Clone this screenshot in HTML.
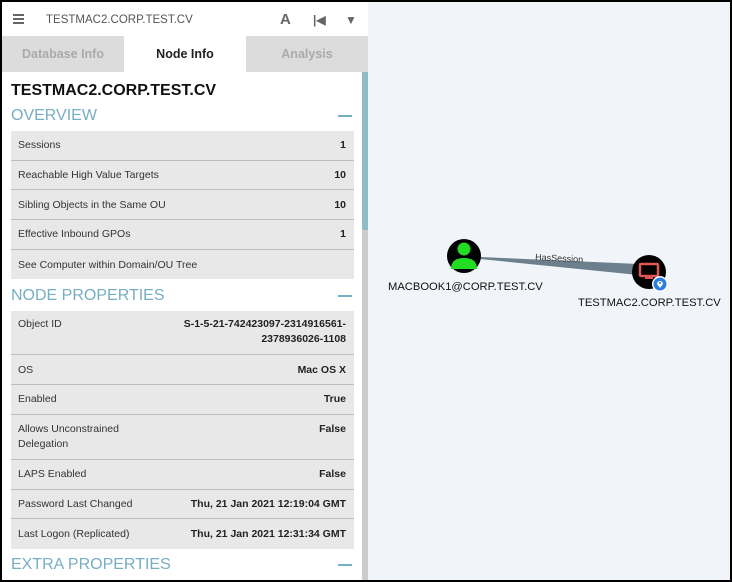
<!DOCTYPE html>
<html><head><style>
*{margin:0;padding:0;box-sizing:border-box}
body{width:732px;height:582px;overflow:hidden;background:#000;font-family:"Liberation Sans",sans-serif;position:relative}
#g{position:absolute;left:368px;top:2px;width:362px;height:578px;background:#f1f4f9}
#p{position:absolute;left:2px;top:2px;width:366px;height:578px;background:#fff;overflow:hidden}
.hdr{height:34px;position:relative;color:#555;font-size:11.5px}
.tabs{position:absolute;top:34px;left:0;width:366px;height:36px;display:flex;background:#dcdcdc}
.tabs div{flex:1;text-align:center;line-height:37px;font-size:12.5px;font-weight:bold;color:#aaa}
.tabs .a{background:#fff;color:#222}
.sb{position:absolute;left:360px;top:70px;width:6px;height:508px;background:#ccc}
.sb i{display:block;height:158px;background:#8fbcc6}
.c{position:absolute;left:9px;top:72px;width:343px}
h1{font-size:16px;font-weight:bold;color:#111;margin-top:8px;height:21px}
h2{font-size:16px;font-weight:normal;color:#76aec3;height:28px;line-height:25px;position:relative}
h2:after{content:"";position:absolute;right:2px;top:12px;width:14px;height:2px;background:#76aec3}
.r{background:#e8e8e8;border-bottom:1px solid #bdbdbd;font-size:10.5px;color:#333;display:flex;justify-content:space-between;padding:0 8px 0 7px;height:29.7px;align-items:center}
.r b{color:#222;text-align:right}
.r.t{align-items:flex-start;padding-top:9px}
.r:last-child{border-bottom:none}
</style></head><body>
<div id="p">
<div class="hdr">
<div style="position:absolute;left:11px;top:12px;width:11px">
<div style="height:2px;background:#666;margin-bottom:2px"></div><div style="height:2px;background:#666;margin-bottom:2px"></div><div style="height:2px;background:#666"></div></div>
<div style="position:absolute;left:44px;top:12px">TESTMAC2.CORP.TEST.CV</div>
<div style="position:absolute;left:278px;top:9px;font-weight:bold;font-size:15px;color:#666">A</div>
<div style="position:absolute;left:311px;top:11px;font-weight:bold;font-size:12px;color:#666">|◀</div>
<div style="position:absolute;left:343px;top:11px;font-size:12px;color:#666">▼</div>
</div>
<div class="tabs"><div>Database Info</div><div class="a">Node Info</div><div>Analysis</div></div>
<div class="sb"><i></i></div>
<div class="c">
<h1>TESTMAC2.CORP.TEST.CV</h1>
<h2>OVERVIEW</h2>
<div>
<div class="r"><span>Sessions</span><b>1</b></div>
<div class="r"><span>Reachable High Value Targets</span><b>10</b></div>
<div class="r"><span>Sibling Objects in the Same OU</span><b>10</b></div>
<div class="r"><span>Effective Inbound GPOs</span><b>1</b></div>
<div class="r"><span>See Computer within Domain/OU Tree</span><b></b></div>
</div>
<h2 style="margin-top:4px">NODE PROPERTIES</h2>
<div>
<div class="r t" style="height:44px;line-height:15px;padding-top:6px"><span>Object ID</span><b>S-1-5-21-742423097-2314916561-<br>2378936026-1108</b></div>
<div class="r"><span>OS</span><b>Mac OS X</b></div>
<div class="r"><span>Enabled</span><b>True</b></div>
<div class="r t" style="height:45px;line-height:15px;padding-top:7px"><span>Allows Unconstrained<br>Delegation</span><b>False</b></div>
<div class="r"><span>LAPS Enabled</span><b>False</b></div>
<div class="r"><span>Password Last Changed</span><b>Thu, 21 Jan 2021 12:19:04 GMT</b></div>
<div class="r"><span>Last Logon (Replicated)</span><b>Thu, 21 Jan 2021 12:31:34 GMT</b></div>
</div>
<h2 style="margin-top:3px">EXTRA PROPERTIES</h2>
</div>
</div>
<div id="g">
<svg width="362" height="578" style="position:absolute;left:0;top:0">
<polygon points="112,255 270,262 270,273 112,257" fill="#6b7f8c"/>
<text x="167" y="258" font-size="9" fill="#333" font-family="Liberation Sans" transform="rotate(3 167 258)">HasSession</text>
<circle cx="96" cy="254" r="17" fill="#000"/>
<circle cx="96" cy="247" r="6.5" fill="#22dd22"/>
<path d="M83 267 q0-11 13-11 q13 0 13 11z" fill="#22dd22"/>
<circle cx="281" cy="270" r="17" fill="#000"/>
<rect x="272" y="262" width="18" height="12" rx="1" fill="none" stroke="#e05555" stroke-width="2.5"/>
<rect x="277" y="275" width="8" height="2" fill="#e05555"/>
<circle cx="292" cy="282" r="8" fill="#fff"/>
<circle cx="292" cy="282" r="6.5" fill="#2a7ee0"/>
<path d="M292 286 l-3-4 a3 3 0 1 1 6 0z" fill="#fff"/>
<circle cx="292" cy="281" r="1" fill="#2a7ee0"/>
<text x="20" y="288" font-size="11.2" fill="#111" font-family="Liberation Sans">MACBOOK1@CORP.TEST.CV</text>
<text x="210" y="304" font-size="11.2" fill="#111" font-family="Liberation Sans">TESTMAC2.CORP.TEST.CV</text>
</svg>
</div>
</body></html>
